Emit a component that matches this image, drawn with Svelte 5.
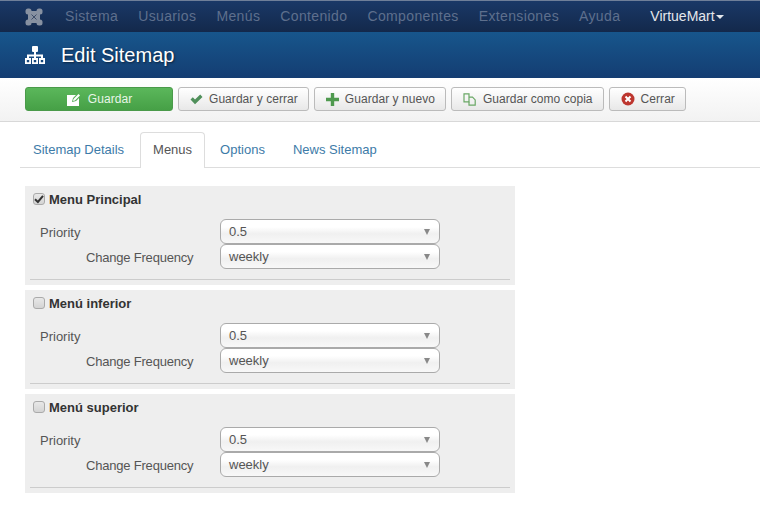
<script>
  const nav = ["Sistema", "Usuarios", "Menús", "Contenido", "Componentes", "Extensiones", "Ayuda"];
  const tabs = ["Sitemap Details", "Menus", "Options", "News Sitemap"];
  const menus = [
    { name: "Menu Principal", on: true },
    { name: "Menú inferior", on: false },
    { name: "Menú superior", on: false },
  ];
</script>

<div class="navbar">
  <svg class="joomla" width="18" height="18" viewBox="0 0 18 18">
    <g fill="#8791a1">
      <rect x="0.500" y="0.500" width="6" height="6" rx="2.500" />
      <rect x="11.500" y="0.500" width="6" height="6" rx="2.500" />
      <rect x="0.500" y="11.500" width="6" height="6" rx="2.500" />
      <rect x="11.500" y="11.500" width="6" height="6" rx="2.500" />
      <path d="M5 3h8l2 2v8l-2 2H5l-2-2V5z" />
    </g>
    <path d="M6.500 6.500 11.500 11.500M11.500 6.500 6.500 11.500" stroke="#3c4c68" stroke-width="1" fill="none" />
  </svg>
  {#each nav as item}
    <span class="nav-item">{item}</span>
  {/each}
  <span class="nav-user">VirtueMart<i class="caret"></i></span>
</div>

<div class="title-bar">
  <svg width="22" height="20" viewBox="0 0 22 20">
    <g fill="#fff">
      <rect x="8" y="1" width="6" height="6" rx="1" />
      <rect x="10" y="7" width="2" height="4" />
      <rect x="3" y="9.500" width="16" height="2" />
      <rect x="3" y="10" width="2" height="4" />
      <rect x="10" y="10" width="2" height="4" />
      <rect x="17" y="10" width="2" height="4" />
      <path fill-rule="evenodd" d="M1 13h6v6H1zM2.800 15v2.200h2.400V15zM8 13h6v6H8zM9.800 15v2.200h2.400V15zM15 13h6v6h-6zM16.800 15v2.200h2.400V15z" />
    </g>
  </svg>
  <h1>Edit Sitemap</h1>
</div>

<div class="toolbar">
  <button class="btn save">
    <svg width="13" height="13" viewBox="0 0 13 13">
      <path d="M0 2h9L6 5 5 9l4-1 3-3v8H0z" fill="#fff" />
      <path d="M6.500 6 11.500 1 13 2.500 8 7.500 6 8z" fill="#fff" />
    </svg>
    Guardar
  </button>
  <button class="btn">
    <svg width="13" height="11" viewBox="0 0 13 11"><path d="M0.500 5.500 2.800 3.300 5 5.600 10.200.6 12.500 2.900 5 10.300z" fill="#4f8f5a" /></svg>
    Guardar y cerrar
  </button>
  <button class="btn">
    <svg width="13" height="13" viewBox="0 0 13 13"><path d="M4.800 0h3.400v4.800H13v3.400H8.200V13H4.800V8.200H0V4.800h4.800z" fill="#4f9a4f" /></svg>
    Guardar y nuevo
  </button>
  <button class="btn">
    <svg width="14" height="13" viewBox="0 0 14 13" fill="none" stroke="#6aa866" stroke-width="1.200">
      <path d="M1 .8h5v8H1z" />
      <path d="M6 4.200h3.500l2.700 2.700v5.300H6V8.800" />
    </svg>
    Guardar como copia
  </button>
  <button class="btn">
    <svg width="14" height="14" viewBox="0 0 14 14">
      <circle cx="7" cy="7" r="6.500" fill="#bd362f" />
      <path d="M4.500 4.500 9.500 9.500M9.500 4.500 4.500 9.500" stroke="#fff" stroke-width="2" />
    </svg>
    Cerrar
  </button>
</div>

<div class="tabs">
  {#each tabs as tab, i}
    <span class="tab" class:active={i === 1}>{tab}</span>
  {/each}
</div>

<div class="panels">
  {#each menus as menu}
    <div class="panel">
      <div class="panel-head">
        <span class="check">
          {#if menu.on}
            <svg width="10" height="10" viewBox="0 0 10 10"><path d="M1 5.200 3.900 8 9 1.800" fill="none" stroke="#333" stroke-width="2" /></svg>
          {/if}
        </span>
        <strong>{menu.name}</strong>
      </div>
      <div class="row">
        <span class="lbl">Priority</span>
        <div class="select">0.5<i></i></div>
      </div>
      <div class="row">
        <span class="lbl indent">Change Frequency</span>
        <div class="select">weekly<i></i></div>
      </div>
      <hr />
    </div>
  {/each}
</div>

<style>
  :global(body) {
    background: #fff;
    font-family: "Liberation Sans", Arial, sans-serif;
    font-size: 13px;
    color: #555;
  }
  .navbar {
    height: 31px;
    box-sizing: content-box;
    border-top: 1px solid #6f7f99;
    background: linear-gradient(#1a3867, #13294b);
    display: flex;
    align-items: center;
    gap: 20px;
    padding-left: 25px;
    font-size: 14px;
    letter-spacing: 0.37px;
  }
  .navbar span {
    margin-bottom: 2px;
  }
  .joomla {
    margin-right: 2px;
  }
  .nav-item {
    color: #5e6f8d;
  }
  .nav-user {
    color: #e4e7ec;
    margin-left: 10px;
    letter-spacing: 0;
  }
  .caret {
    display: inline-block;
    border-top: 4px solid #e4e7ec;
    border-left: 4px solid transparent;
    border-right: 4px solid transparent;
    vertical-align: middle;
    margin-left: 1px;
  }
  .title-bar {
    height: 46px;
    background: linear-gradient(#17568c, #143d72);
    display: flex;
    align-items: center;
    padding-left: 24px;
    gap: 15px;
  }
  h1 {
    margin: 0;
    color: #fff;
    font-size: 20px;
    font-weight: normal;
    text-shadow: 1px 1px 2px rgba(0, 0, 0, 0.5);
  }
  .toolbar {
    height: 44px;
    box-sizing: border-box;
    background: linear-gradient(#fff, #f2f2f2);
    border-bottom: 1px solid #d8d8d8;
    display: flex;
    gap: 5px;
    padding: 9px 0 0 25px;
  }
  .btn {
    height: 24px;
    box-sizing: border-box;
    padding: 0 10px 0 11px;
    display: flex;
    align-items: center;
    gap: 6px;
    font: 12px "Liberation Sans", Arial, sans-serif;
    letter-spacing: 0.05px;
    color: #555;
    background: linear-gradient(#fff, #e8e8e8);
    border: 1px solid #bbb;
    border-radius: 3px;
  }
  .btn svg {
    flex: none;
  }
  .save {
    width: 148px;
    justify-content: center;
    gap: 8px;
    color: #e8f5e8;
    background: linear-gradient(#5bb75b, #46a046);
    border-color: #4a9a4a;
  }
  .tabs {
    display: flex;
    margin: 10px 0 0 20px;
    height: 36px;
    box-sizing: border-box;
    border-bottom: 1px solid #ddd;
  }
  .tab {
    padding: 10px 13px 0;
    margin-right: 2px;
    color: #3d7ba8;
    height: 35px;
    box-sizing: border-box;
  }
  .tab.active {
    height: 36px;
    color: #555;
    background: #fff;
    border: 1px solid #ddd;
    border-bottom: none;
    border-radius: 4px 4px 0 0;
    padding: 9px 12px 0;
    margin: 0 2px 0 1px;
  }
  .panels {
    margin: 18px 0 0 25px;
    width: 490px;
    display: flex;
    flex-direction: column;
    gap: 5px;
  }
  .panel {
    height: 99px;
    background: #eee;
    padding: 0 5px;
    box-sizing: border-box;
  }
  .panel-head {
    height: 33px;
    display: flex;
    align-items: center;
    gap: 4px;
    padding-left: 3px;
    padding-bottom: 7px;
    box-sizing: border-box;
    color: #333;
  }
  .check {
    width: 12px;
    height: 12px;
    box-sizing: border-box;
    border: 1px solid #aaa;
    border-radius: 3px;
    background: linear-gradient(#e8e8e8, #d4d4d4);
    display: flex;
    align-items: center;
    justify-content: center;
  }
  .row {
    height: 25px;
    display: flex;
    align-items: center;
    padding-left: 10px;
  }
  .lbl {
    width: 180px;
    flex: none;
    padding-top: 2px;
  }
  .lbl.indent {
    padding-left: 46px;
    box-sizing: border-box;
    letter-spacing: -0.2px;
  }
  .select {
    width: 220px;
    height: 25px;
    box-sizing: border-box;
    border: 1px solid #aaa;
    border-radius: 6px;
    background: linear-gradient(#fff, #fff 30%, #f0f0f0 60%, #f8f8f8);
    padding: 0 8px;
    line-height: 23px;
    position: relative;
  }
  .select i {
    position: absolute;
    right: 9px;
    top: 9px;
    border-top: 6px solid #888;
    border-left: 3.500px solid transparent;
    border-right: 3.500px solid transparent;
  }
  hr {
    margin: 10px 0 0;
    border: none;
    border-top: 1px solid #ccc;
  }
</style>
